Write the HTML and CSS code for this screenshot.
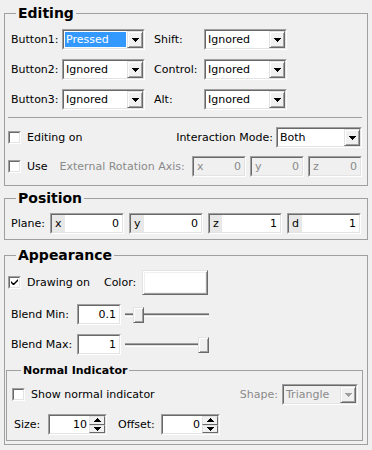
FILE: index.html
```html
<!DOCTYPE html>
<html lang="en">
  <head>
    <link rel="stylesheet" href="styles.css">
    <meta charset="UTF-8" />
    <title>Editing</title>
  </head>
  <body>
    <div id="panel">
      <fieldset class="group editing">
        <legend>Editing</legend>
        <div class="button-grid">
          <span>Button1:</span>
          <div class="combo">
            <div class="combo-inner">
              <span class="combo-text selected">Pressed</span>
              <span class="combo-btn"><svg width="7" height="4" viewBox="0 0 7 4"><path d="M0 0h7v1h-1v1h-1v1h-1v1h-1v-1h-1v-1h-1v-1h-1z" /></svg></span>
            </div>
          </div>
          <span>Shift:</span>
          <div class="combo">
            <div class="combo-inner">
              <span class="combo-text">Ignored</span>
              <span class="combo-btn"><svg width="7" height="4" viewBox="0 0 7 4"><path d="M0 0h7v1h-1v1h-1v1h-1v1h-1v-1h-1v-1h-1v-1h-1z" /></svg></span>
            </div>
          </div>
          <span>Button2:</span>
          <div class="combo">
            <div class="combo-inner">
              <span class="combo-text">Ignored</span>
              <span class="combo-btn"><svg width="7" height="4" viewBox="0 0 7 4"><path d="M0 0h7v1h-1v1h-1v1h-1v1h-1v-1h-1v-1h-1v-1h-1z" /></svg></span>
            </div>
          </div>
          <span>Control:</span>
          <div class="combo">
            <div class="combo-inner">
              <span class="combo-text">Ignored</span>
              <span class="combo-btn"><svg width="7" height="4" viewBox="0 0 7 4"><path d="M0 0h7v1h-1v1h-1v1h-1v1h-1v-1h-1v-1h-1v-1h-1z" /></svg></span>
            </div>
          </div>
          <span>Button3:</span>
          <div class="combo">
            <div class="combo-inner">
              <span class="combo-text">Ignored</span>
              <span class="combo-btn"><svg width="7" height="4" viewBox="0 0 7 4"><path d="M0 0h7v1h-1v1h-1v1h-1v1h-1v-1h-1v-1h-1v-1h-1z" /></svg></span>
            </div>
          </div>
          <span>Alt:</span>
          <div class="combo">
            <div class="combo-inner">
              <span class="combo-text">Ignored</span>
              <span class="combo-btn"><svg width="7" height="4" viewBox="0 0 7 4"><path d="M0 0h7v1h-1v1h-1v1h-1v1h-1v-1h-1v-1h-1v-1h-1z" /></svg></span>
            </div>
          </div>
        </div>

        <div class="separator"></div>

        <div class="row mode-row">
          <span class="check"><span class="check-inner"></span></span>
          <span class="check-label">Editing on</span>
          <span class="mode-label">Interaction Mode:</span>
          <div class="combo mode-combo">
            <div class="combo-inner">
              <span class="combo-text">Both</span>
              <span class="combo-btn"><svg width="7" height="4" viewBox="0 0 7 4"><path d="M0 0h7v1h-1v1h-1v1h-1v1h-1v-1h-1v-1h-1v-1h-1z" /></svg></span>
            </div>
          </div>
        </div>

        <div class="row axis-row">
          <span class="check"><span class="check-inner"></span></span>
          <span class="check-label">Use</span>
          <span class="axis-label disabled">External Rotation Axis:</span>
          <div class="axis-fields">
            <div class="field axis-field">
              <div class="field-inner disabled"><span class="prefix">x</span><span class="value">0</span></div>
            </div>
            <div class="field axis-field">
              <div class="field-inner disabled"><span class="prefix">y</span><span class="value">0</span></div>
            </div>
            <div class="field axis-field">
              <div class="field-inner disabled"><span class="prefix">z</span><span class="value">0</span></div>
            </div>
          </div>
        </div>
      </fieldset>

      <fieldset class="group position">
        <legend>Position</legend>
        <div class="row plane-row">
          <span class="plane-label">Plane:</span>
          <div class="plane-fields">
            <div class="field plane-field">
              <div class="field-inner"><span class="prefix">x</span><span class="value">0</span></div>
            </div>
            <div class="field plane-field">
              <div class="field-inner"><span class="prefix">y</span><span class="value">0</span></div>
            </div>
            <div class="field plane-field">
              <div class="field-inner"><span class="prefix">z</span><span class="value">1</span></div>
            </div>
            <div class="field plane-field">
              <div class="field-inner"><span class="prefix">d</span><span class="value">1</span></div>
            </div>
          </div>
        </div>
      </fieldset>

      <fieldset class="group appearance">
        <legend>Appearance</legend>
        <div class="row draw-row">
          <span class="check">
            <span class="check-inner">
              <svg width="9" height="9" viewBox="0 0 9 9"><path d="M1 3v2l2 2h1l4-4v-2l-4 4h-1z" /></svg>
            </span>
          </span>
          <span class="check-label">Drawing on</span>
          <span class="color-label">Color:</span>
          <span class="color-btn"><span class="color-swatch"></span></span>
        </div>

        <div class="row blend-row">
          <span class="blend-label">Blend Min:</span>
          <div class="field blend-field">
            <div class="field-inner"><span class="value">0.1</span></div>
          </div>
          <div class="slider">
            <div class="groove"></div>
            <div class="handle" style="left: 8px"></div>
          </div>
        </div>

        <div class="row blend-row">
          <span class="blend-label">Blend Max:</span>
          <div class="field blend-field">
            <div class="field-inner"><span class="value">1</span></div>
          </div>
          <div class="slider">
            <div class="groove"></div>
            <div class="handle" style="left: 73px"></div>
          </div>
        </div>

        <fieldset class="group normal">
          <legend>Normal Indicator</legend>
          <div class="row show-row">
            <span class="check"><span class="check-inner"></span></span>
            <span class="check-label">Show normal indicator</span>
            <span class="shape-label disabled">Shape:</span>
            <div class="combo shape-combo">
              <div class="combo-inner disabled">
                <span class="combo-text">Triangle</span>
                <span class="combo-btn"><svg width="7" height="4" viewBox="0 0 7 4"><path d="M0 0h7v1h-1v1h-1v1h-1v1h-1v-1h-1v-1h-1v-1h-1z" /></svg></span>
              </div>
            </div>
          </div>
          <div class="row size-row">
            <span class="size-label">Size:</span>
            <div class="field spin">
              <div class="field-inner">
                <span class="value">10</span>
                <span class="spin-btns">
                  <span class="spin-btn"><svg width="7" height="4" viewBox="0 0 7 4"><path d="M3 0h1v1h1v1h1v1h1v1h-7v-1h1v-1h1v-1h1z" /></svg></span>
                  <span class="spin-btn"><svg width="7" height="4" viewBox="0 0 7 4"><path d="M0 0h7v1h-1v1h-1v1h-1v1h-1v-1h-1v-1h-1v-1h-1z" /></svg></span>
                </span>
              </div>
            </div>
            <span class="offset-label">Offset:</span>
            <div class="field spin">
              <div class="field-inner">
                <span class="value">0</span>
                <span class="spin-btns">
                  <span class="spin-btn"><svg width="7" height="4" viewBox="0 0 7 4"><path d="M3 0h1v1h1v1h1v1h1v1h-7v-1h1v-1h1v-1h1z" /></svg></span>
                  <span class="spin-btn"><svg width="7" height="4" viewBox="0 0 7 4"><path d="M0 0h7v1h-1v1h-1v1h-1v1h-1v-1h-1v-1h-1v-1h-1z" /></svg></span>
                </span>
              </div>
            </div>
          </div>
        </fieldset>
      </fieldset>
    </div>
  </body>
</html>
```

FILE: styles.css
```css
* {
  box-sizing: border-box;
}

body {
  margin: 0;
  background-color: #f0f0f0;
  font-family: "DejaVu Sans", "Liberation Sans", sans-serif;
  font-size: 11px;
  line-height: 13px;
  color: #000;
}

#panel {
  width: 372px;
  height: 450px;
  padding: 5px 4px 0 4px;
  overflow: hidden;
}

/* group boxes */

.group {
  margin: 0;
  min-width: 0;
  border: 1px solid #a0a0a0;
  padding: 0 5px 8px 3px;
}

.group legend {
  font-size: 14px;
  line-height: 17px;
  font-weight: bold;
  padding: 0 2px;
  margin-left: 8px;
}

.editing {
  padding-top: 7px;
}

.position {
  margin-top: 4px;
  padding-top: 6px;
  padding-bottom: 5px;
}

.appearance {
  margin-top: 7px;
  padding-top: 6px;
  padding-bottom: 3px;
}

.normal {
  margin: 9px -1px 0 -2px;
  padding: 7px 4px 5px 5px;
}

.normal legend {
  font-size: 11px;
  line-height: 13px;
  margin-left: 9px;
}

.row {
  display: flex;
  align-items: center;
  height: 21px;
}

.disabled {
  color: #8a8a8a;
}

/* editing */

.button-grid {
  display: grid;
  grid-template-columns: 51px 92px 50px 83px;
  grid-auto-rows: 21px;
  row-gap: 9px;
  align-items: center;
  padding-left: 3px;
}

.button-grid .combo {
  width: 83px;
}

.separator {
  height: 1px;
  background-color: #a0a0a0;
  margin-top: 7px;
}

.mode-row {
  margin-top: 9px;
}

.mode-label {
  margin-left: auto;
  margin-right: 3px;
}

.mode-combo {
  width: 86px;
}

.axis-row {
  margin-top: 8px;
}

.axis-label {
  margin-left: 12px;
}

.axis-fields {
  display: flex;
  gap: 4px;
  margin-left: auto;
}

.axis-field {
  width: 54px;
}

.axis-field .prefix {
  background-color: transparent;
}

/* combo boxes */

.combo {
  height: 21px;
  border: 1px solid;
  border-color: #a0a0a0 #ffffff #ffffff #a0a0a0;
}

.combo-inner {
  display: flex;
  height: 100%;
  background-color: #fff;
  border: 1px solid;
  border-color: #696969 #e3e3e3 #e3e3e3 #696969;
}

.combo-text {
  flex: 1;
  margin: 1px;
  padding-left: 1px;
  line-height: 15px;
}

.combo-text.selected {
  background-color: #3399ff;
  color: #fff;
}

.combo-btn {
  width: 16px;
  display: flex;
  align-items: center;
  justify-content: center;
  background-color: #f0f0f0;
  border: 1px solid;
  border-color: #e3e3e3 #696969 #696969 #e3e3e3;
  box-shadow: inset 1px 1px #fff, inset -1px -1px #a0a0a0;
}

.combo-btn svg,
.spin-btn svg {
  fill: #000;
}

.combo-inner.disabled {
  background-color: #f0f0f0;
}

.combo-inner.disabled svg {
  fill: #a0a0a0;
}

/* check boxes */

.check {
  width: 13px;
  height: 13px;
  border: 1px solid;
  border-color: #a0a0a0 #ffffff #ffffff #a0a0a0;
}

.check-inner {
  display: flex;
  align-items: center;
  justify-content: center;
  width: 100%;
  height: 100%;
  background-color: #fff;
  border: 1px solid;
  border-color: #696969 #e3e3e3 #e3e3e3 #696969;
}

.check-inner svg {
  fill: #000;
}

.check-label {
  margin-left: 6px;
}

/* line edits */

.field {
  height: 21px;
  border: 1px solid;
  border-color: #a0a0a0 #ffffff #ffffff #a0a0a0;
}

.field-inner {
  display: flex;
  align-items: center;
  height: 100%;
  background-color: #fff;
  border: 1px solid;
  border-color: #696969 #e3e3e3 #e3e3e3 #696969;
}

.field-inner.disabled {
  background-color: #f0f0f0;
}

.prefix {
  align-self: stretch;
  display: flex;
  align-items: center;
  padding: 0 3px 0 3px;
  background-color: #e8e8e8;
}

.value {
  flex: 1;
  text-align: right;
  padding-right: 3px;
}

/* position */

.plane-label {
  width: 42px;
  padding-left: 3px;
}

.plane-fields {
  display: flex;
  gap: 5px;
}

.plane-field {
  width: 74px;
}

/* appearance */

.draw-row {
  height: 25px;
}

.color-label {
  margin-left: 14px;
}

.color-btn {
  width: 66px;
  height: 25px;
  margin-left: 6px;
  border: 1px solid;
  border-color: #e3e3e3 #696969 #696969 #e3e3e3;
  box-shadow: inset 1px 1px #fff, inset -1px -1px #a0a0a0;
  padding: 2px;
}

.color-swatch {
  display: block;
  width: 100%;
  height: 100%;
  background-color: #fff;
}

.blend-row {
  margin-top: 9px;
}

.blend-label {
  width: 69px;
  padding-left: 3px;
}

.blend-field {
  width: 44px;
}

.slider {
  position: relative;
  display: flex;
  align-items: center;
  width: 84px;
  height: 21px;
  margin-left: 4px;
}

.groove {
  width: 100%;
  height: 4px;
  border-top: 1px solid #a0a0a0;
  border-bottom: 1px solid #fff;
  background: linear-gradient(#696969 50%, #e3e3e3 50%);
}

.handle {
  position: absolute;
  top: 3px;
  width: 11px;
  height: 16px;
  background-color: #f0f0f0;
  border: 1px solid;
  border-color: #e3e3e3 #696969 #696969 #e3e3e3;
  box-shadow: inset 1px 1px #fff, inset -1px -1px #a0a0a0;
}

/* normal indicator */

.shape-label {
  margin-left: auto;
  margin-right: 4px;
}

.shape-combo {
  width: 76px;
}

.size-row {
  margin-top: 9px;
}

.size-label {
  width: 36px;
  padding-left: 2px;
}

.spin {
  width: 59px;
}

.spin .value {
  padding-right: 2px;
}

.spin-btns {
  display: flex;
  flex-direction: column;
  width: 16px;
  height: 100%;
}

.spin-btn {
  flex: 1;
  display: flex;
  align-items: center;
  justify-content: center;
  background-color: #f0f0f0;
  border: 1px solid;
  border-color: #e3e3e3 #696969 #696969 #e3e3e3;
}

.offset-label {
  width: 43px;
  margin-left: 11px;
}
```
